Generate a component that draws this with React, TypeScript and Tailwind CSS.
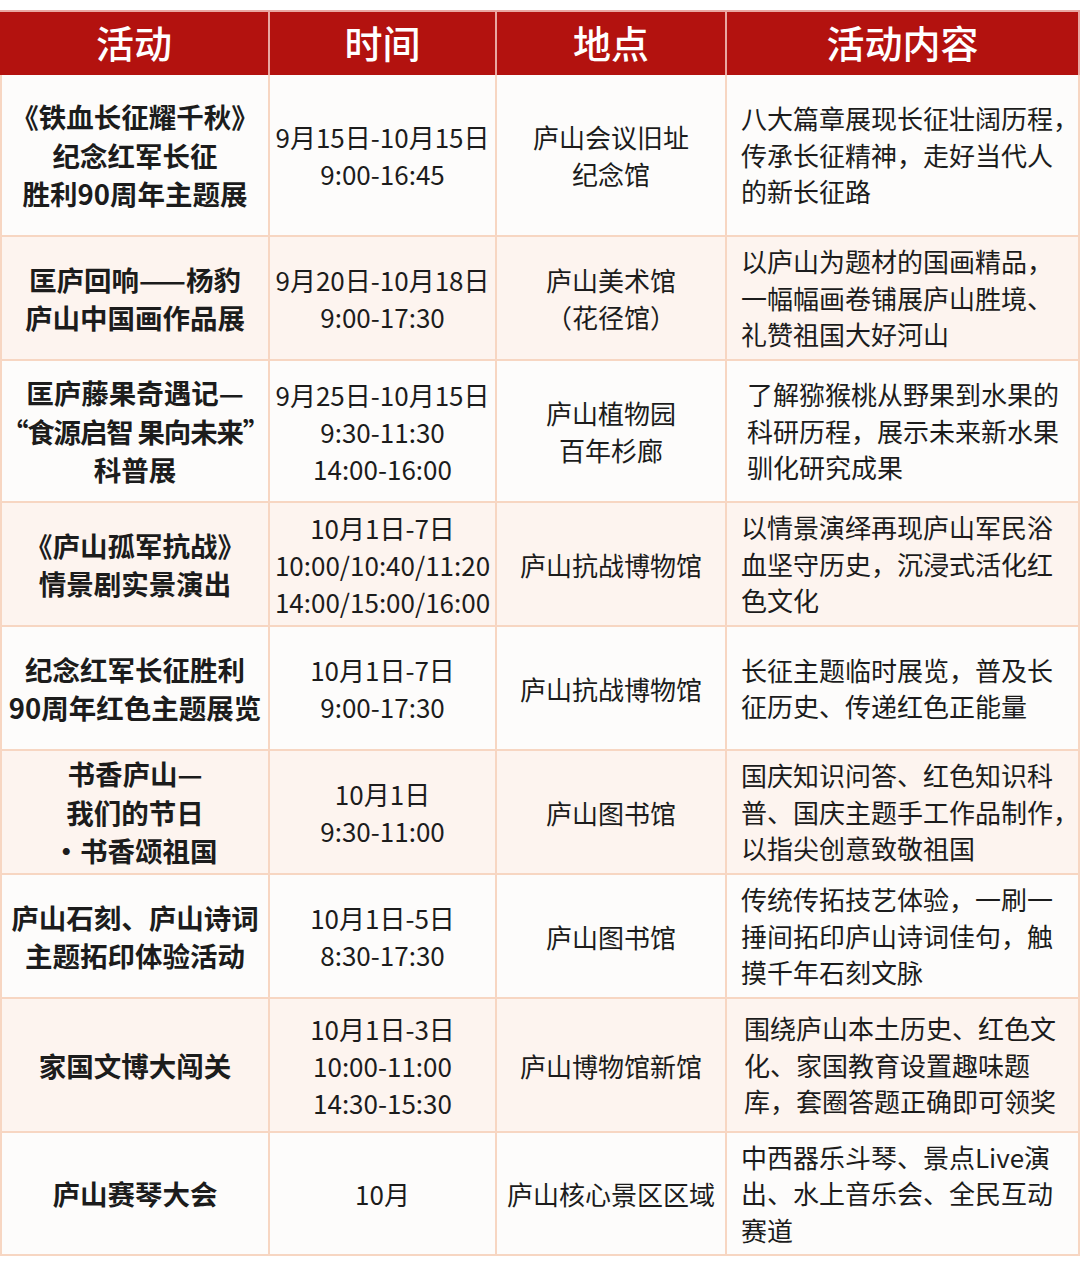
import React from "react";

type Row = {
  h: number;
  a: string[];
  t: string[];
  p: string[];
  c: string[];
  cpad?: string;
};

const rows: Row[] = [
  {
    h: 162,
    a: ["《铁血长征耀千秋》", "纪念红军长征", "胜利90周年主题展"],
    t: ["9月15日-10月15日", "9:00-16:45"],
    p: ["庐山会议旧址", "纪念馆"],
    c: ["八大篇章展现长征壮阔历程，", "传承长征精神，走好当代人", "的新长征路"],
  },
  {
    h: 124,
    a: ["匡庐回响——杨豹", "庐山中国画作品展"],
    t: ["9月20日-10月18日", "9:00-17:30"],
    p: ["庐山美术馆", "（花径馆）"],
    c: ["以庐山为题材的国画精品，", "一幅幅画卷铺展庐山胜境、", "礼赞祖国大好河山"],
  },
  {
    h: 142,
    a: ["匡庐藤果奇遇记—", "“食源启智 果向未来”", "科普展"],
    t: ["9月25日-10月15日", "9:30-11:30", "14:00-16:00"],
    p: ["庐山植物园", "百年杉廊"],
    c: ["了解猕猴桃从野果到水果的", "科研历程，展示未来新水果", "驯化研究成果"],
    cpad: "pl-[20px]",
  },
  {
    h: 124,
    a: ["《庐山孤军抗战》", "情景剧实景演出"],
    t: ["10月1日-7日", "10:00/10:40/11:20", "14:00/15:00/16:00"],
    p: ["庐山抗战博物馆"],
    c: ["以情景演绎再现庐山军民浴", "血坚守历史，沉浸式活化红", "色文化"],
  },
  {
    h: 124,
    a: ["纪念红军长征胜利", "90周年红色主题展览"],
    t: ["10月1日-7日", "9:00-17:30"],
    p: ["庐山抗战博物馆"],
    c: ["长征主题临时展览，普及长", "征历史、传递红色正能量"],
  },
  {
    h: 124,
    a: ["书香庐山—", "我们的节日", "·书香颂祖国"],
    t: ["10月1日", "9:30-11:00"],
    p: ["庐山图书馆"],
    c: ["国庆知识问答、红色知识科", "普、国庆主题手工作品制作，", "以指尖创意致敬祖国"],
  },
  {
    h: 124,
    a: ["庐山石刻、庐山诗词", "主题拓印体验活动"],
    t: ["10月1日-5日", "8:30-17:30"],
    p: ["庐山图书馆"],
    c: ["传统传拓技艺体验，一刷一", "捶间拓印庐山诗词佳句，触", "摸千年石刻文脉"],
  },
  {
    h: 134,
    a: ["家国文博大闯关"],
    t: ["10月1日-3日", "10:00-11:00", "14:30-15:30"],
    p: ["庐山博物馆新馆"],
    c: ["围绕庐山本土历史、红色文", "化、家国教育设置趣味题", "库，套圈答题正确即可领奖"],
    cpad: "pl-[17px]",
  },
  {
    h: 123,
    a: ["庐山赛琴大会"],
    t: ["10月"],
    p: ["庐山核心景区区域"],
    c: ["中西器乐斗琴、景点Live演", "出、水上音乐会、全民互动", "赛道"],
  },
];

const font = { fontFamily: '"Noto Sans CJK SC", "Noto Sans", sans-serif' };

export default function App() {
  return (
    <div className="w-[1080px] h-[1264px] bg-white pt-[10px]" style={font}>
      <div className="flex flex-col w-[1080px]">
        <div className="grid grid-cols-[270px_227px_230px_353px] h-[65px] bg-[#b3120f] border-t-2 border-[#e9a7a1] text-white text-[38px] font-medium">
          <div className="flex items-center justify-center border-r-2 border-[#e9a7a1] leading-none pb-[4px]">活动</div>
          <div className="flex items-center justify-center border-r-2 border-[#e9a7a1] leading-none pb-[4px]">时间</div>
          <div className="flex items-center justify-center border-r-2 border-[#e9a7a1] leading-none pb-[4px]">地点</div>
          <div className="flex items-center justify-center border-r-2 border-[#e9a7a1] leading-none pb-[4px]">活动内容</div>
        </div>
        {rows.map((r, i) => (
          <div
            key={i}
            className={
              "grid grid-cols-[270px_227px_230px_353px] text-[#1c1c1c] " +
              (i % 2 === 0 ? "bg-[#fdfcfb]" : "bg-[#fdf4ef]")
            }
            style={{ height: r.h }}
          >
            <div className="flex flex-col items-center justify-center border-l-2 border-r-2 border-b-2 border-[#f7d6c2] text-[27.5px] font-bold leading-[38.5px] whitespace-nowrap">
              {r.a.map((l, j) => (
                <div key={j} className={l.startsWith("“") ? "tracking-[-1.2px]" : ""}>
                  {l}
                </div>
              ))}
            </div>
            <div className="flex flex-col items-center justify-center border-r-2 border-b-2 border-[#f7d6c2] text-[26px] leading-[37px] whitespace-nowrap">
              {r.t.map((l, j) => (
                <div key={j}>{l}</div>
              ))}
            </div>
            <div className="flex flex-col items-center justify-center border-r-2 border-b-2 border-[#f7d6c2] text-[26px] leading-[37px] whitespace-nowrap">
              {r.p.map((l, j) => (
                <div key={j}>{l}</div>
              ))}
            </div>
            <div
              className={
                "flex flex-col items-start justify-center border-r-2 border-b-2 border-[#f7d6c2] text-[26px] leading-[36.5px] whitespace-nowrap overflow-hidden " +
                (r.cpad ?? "pl-[14px]")
              }
            >
              {r.c.map((l, j) => (
                <div key={j}>{l}</div>
              ))}
            </div>
          </div>
        ))}
      </div>
    </div>
  );
}
